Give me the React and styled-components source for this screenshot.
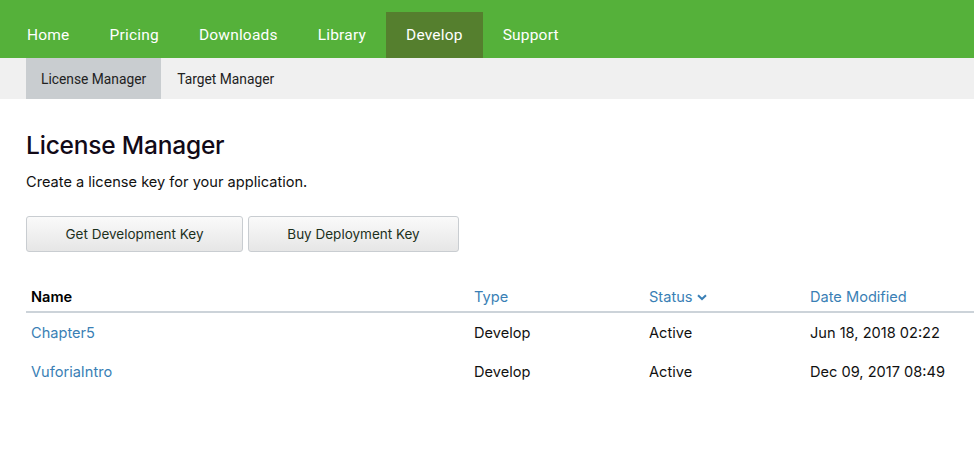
import React from "react";
import styled, { createGlobalStyle } from "styled-components";

const Global = createGlobalStyle`
  html, body { margin: 0; padding: 0; background: #fff; }
  body { font-family: "Inter", "Lato", "Liberation Sans", sans-serif; color: #111; }
`;

const TopNav = styled.nav`
  height: 58px;
  background: #55b13a;
  display: flex;
  align-items: flex-end;
  padding-left: 7px;
`;

const NavItem = styled.a`
  height: 46px;
  display: flex;
  align-items: center;
  padding: 0 20px 1px;
  font-family: "Roboto", "Liberation Sans", sans-serif;
  font-size: 15.5px;
  letter-spacing: 0.2px;
  color: #fff;
  background: ${(p) => (p.$active ? "#557f2e" : "transparent")};
  box-sizing: border-box;
`;

const SubNav = styled.div`
  height: 41px;
  background: #f0f0f0;
  display: flex;
  padding-left: 26px;
`;

const SubItem = styled.a`
  display: flex;
  align-items: center;
  padding: 0 ${(p) => p.$px}px;
  font-family: "Roboto", "Liberation Sans", sans-serif;
  font-size: 13.8px;
  color: #222;
  background: ${(p) => (p.$active ? "#c9cdd0" : "transparent")};
`;

const Main = styled.main`
  padding: 28px 0 0 26px;
`;

const Title = styled.h1`
  margin: 0;
  font-size: 24.5px;
  font-weight: 500;
  letter-spacing: -0.2px;
  color: #120a17;
  line-height: 36px;
`;

const Lead = styled.p`
  margin: 9px 0 0;
  font-size: 14.6px;
  line-height: 20px;
  color: #111;
`;

const Buttons = styled.div`
  display: flex;
  gap: 5px;
  margin-top: 24px;
`;

const Button = styled.button`
  width: ${(p) => p.$w}px;
  height: 36px;
  border: 1px solid #c9cdd1;
  border-radius: 3px;
  background: linear-gradient(#fafafa, #e6e6e6);
  font-family: "Inter", "Lato", "Liberation Sans", sans-serif;
  font-size: 13.5px;
  color: #1c301c;
  padding: 0;
  cursor: pointer;
`;

const Table = styled.div`
  margin-top: 31px;
`;

const Row = styled.div`
  display: grid;
  grid-template-columns: 443px 175px 161px 1fr;
  align-items: center;
  height: ${(p) => (p.$head ? 30 : 39)}px;
  padding-left: 5px;
  border-bottom: ${(p) => (p.$head ? "2px solid #ccd3d9" : "none")};
  font-size: 14.6px;
  box-sizing: border-box;
`;

const Cell = styled.div`
  color: ${(p) => (p.$link ? "#3a7fb5" : p.$bold ? "#000" : "#111")};
  font-weight: ${(p) => (p.$bold ? 600 : 400)};
  display: flex;
  align-items: center;
  gap: 4px;
  white-space: nowrap;
`;

const Chevron = () => (
  <svg width="10" height="7" viewBox="0 0 10 7">
    <path d="M1 1.2 L5 5 L9 1.2" fill="none" stroke="#3a7fb5" strokeWidth="2" />
  </svg>
);

const rows = [
  ["Chapter5", "Develop", "Active", "Jun 18, 2018 02:22"],
  ["VuforiaIntro", "Develop", "Active", "Dec 09, 2017 08:49"],
];

export default function App() {
  return (
    <>
      <Global />
      <TopNav>
        <NavItem>Home</NavItem>
        <NavItem>Pricing</NavItem>
        <NavItem>Downloads</NavItem>
        <NavItem>Library</NavItem>
        <NavItem $active>Develop</NavItem>
        <NavItem>Support</NavItem>
      </TopNav>
      <SubNav>
        <SubItem $px={15} $active>License Manager</SubItem>
        <SubItem $px={16}>Target Manager</SubItem>
      </SubNav>
      <Main>
        <Title>License Manager</Title>
        <Lead>Create a license key for your application.</Lead>
        <Buttons>
          <Button $w={217}>Get Development Key</Button>
          <Button $w={211}>Buy Deployment Key</Button>
        </Buttons>
        <Table>
          <Row $head>
            <Cell $bold>Name</Cell>
            <Cell $link>Type</Cell>
            <Cell $link>
              Status <Chevron />
            </Cell>
            <Cell $link>Date Modified</Cell>
          </Row>
          {rows.map((r) => (
            <Row key={r[0]}>
              <Cell $link>{r[0]}</Cell>
              <Cell>{r[1]}</Cell>
              <Cell>{r[2]}</Cell>
              <Cell>{r[3]}</Cell>
            </Row>
          ))}
        </Table>
      </Main>
    </>
  );
}
